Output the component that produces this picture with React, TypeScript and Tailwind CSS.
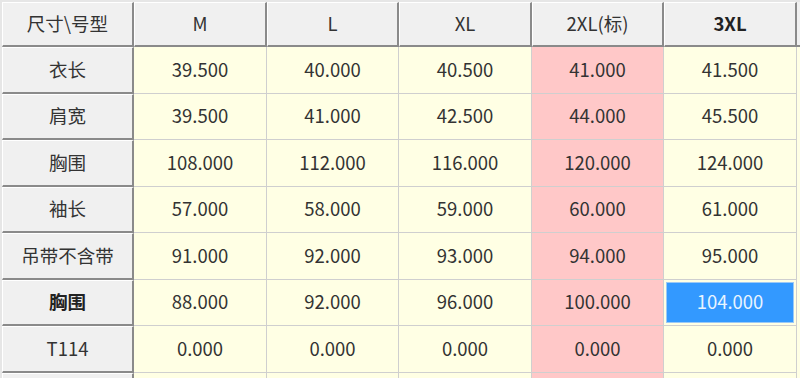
import React from "react";

const cols = ["M", "L", "XL", "2XL(标)", "3XL"];
const rows: { name: string; vals: string[]; bold?: boolean }[] = [
  { name: "衣长", vals: ["39.500", "40.000", "40.500", "41.000", "41.500"] },
  { name: "肩宽", vals: ["39.500", "41.000", "42.500", "44.000", "45.500"] },
  { name: "胸围", vals: ["108.000", "112.000", "116.000", "120.000", "124.000"] },
  { name: "袖长", vals: ["57.000", "58.000", "59.000", "60.000", "61.000"] },
  { name: "吊带不含带", vals: ["91.000", "92.000", "93.000", "94.000", "95.000"] },
  { name: "胸围", vals: ["88.000", "92.000", "96.000", "100.000", "104.000"], bold: true },
  { name: "T114", vals: ["0.000", "0.000", "0.000", "0.000", "0.000"] },
  { name: "", vals: ["", "", "", "", ""] },
];

const grid = "grid grid-cols-[132px_133px_132px_133px_132px_133px_1fr]";

export default function App() {
  return (
    <div
      className="w-[800px] h-[378px] overflow-hidden bg-[#e6e6e6] pl-[2px] pt-[2px] text-[#333] text-[18.5px]"
      style={{ fontFamily: '"Noto Sans CJK SC", "Noto Sans", sans-serif' }}
    >
      <div className={`${grid} h-[45px]`}>
        <div className="flex items-center justify-center bg-[#f0f0f0] border-l border-t border-white border-r-2 border-b-2 border-r-[#8a8a8a] border-b-[#8a8a8a]">
          尺寸\号型
        </div>
        {cols.map((c, i) => (
          <div
            key={c}
            className={`flex items-center justify-center bg-[#f0f0f0] border-l border-t border-white border-r-2 border-b-2 border-r-[#8a8a8a] border-b-[#8a8a8a] ${i === 4 ? "font-bold text-[#222]" : ""}`}
          >
            {c}
          </div>
        ))}
        <div className="bg-[#f0f0f0] border-b-2 border-b-[#8a8a8a]" />
      </div>
      {rows.map((r, ri) => (
        <div key={ri} className={`${grid} h-[46.5px]`}>
          <div
            className={`flex items-center justify-center bg-[#f0f0f0] border-l border-t border-white border-r-2 border-b-2 border-r-[#8a8a8a] border-b-[#8a8a8a] ${r.bold ? "font-bold text-[#222]" : ""}`}
          >
            {r.name}
          </div>
          {r.vals.map((v, ci) => {
            const sel = ri === 5 && ci === 4;
            const bg = ci === 3 ? "bg-[#ffc8c8]" : "bg-[#ffffe4]";
            return (
              <div key={ci} className={`${bg} border-r border-b border-[#cfcfcf] flex`}>
                {sel ? (
                  <div className="m-[2px] flex-1 flex items-center justify-center bg-[#3399ff] border border-[#9cc9f5] text-[#e8f4ff]">
                    {v}
                  </div>
                ) : (
                  <div className="flex-1 flex items-center justify-center">{v}</div>
                )}
              </div>
            );
          })}
          <div className="bg-[#ffffe4]" />
        </div>
      ))}
    </div>
  );
}
